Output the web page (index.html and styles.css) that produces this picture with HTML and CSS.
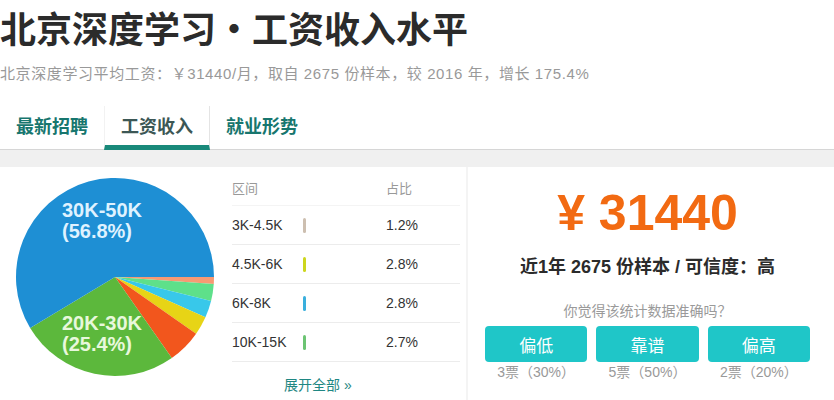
FILE: index.html
```html
<!DOCTYPE html>
<html>
<head>
    <title>北京深度学习 · 工资收入水平</title>
    <link rel="stylesheet" href="styles.css">
</head>
<body>
    <div class="page">
        <h1 class="title">北京深度学习<span class="dot">•</span>工资收入水平</h1>
        <p class="summary">北京深度学习平均工资：￥31440/月，取自 2675 份样本，较 2016 年，增长 175.4%</p>

        <div class="tabs">
            <a class="tab">最新招聘</a>
            <a class="tab active">工资收入</a>
            <a class="tab">就业形势</a>
        </div>
        <div class="band"></div>

        <div class="panels">
            <div class="panel chart-panel">
                <svg class="pie" width="232" height="232" viewBox="0 0 232 232">
                    <path d="M115,110 L214,110 A99,99 0 0 1 213.76,116.91 Z" fill="#f79a73"/>
                    <path d="M115,110 L213.76,116.91 A99,99 0 0 1 211.06,133.95 Z" fill="#5ee08a"/>
                    <path d="M115,110 L211.06,133.95 A99,99 0 0 1 205.44,150.27 Z" fill="#38c8ea"/>
                    <path d="M115,110 L205.44,150.27 A99,99 0 0 1 196.10,166.79 Z" fill="#e7d416"/>
                    <path d="M115,110 L196.10,166.79 A99,99 0 0 1 171.79,191.10 Z" fill="#f2561d"/>
                    <path d="M115,110 L171.79,191.10 A99,99 0 0 1 30.14,160.99 Z" fill="#5cb83c"/>
                    <path d="M115,110 L30.14,160.99 A99,99 0 1 1 214,110 Z" fill="#1e8fd4"/>
                    <text class="pie-label blue-label" x="62" y="50">30K-50K</text>
                    <text class="pie-label blue-label" x="62" y="71">(56.8%)</text>
                    <text class="pie-label green-label" x="62" y="163">20K-30K</text>
                    <text class="pie-label green-label" x="62" y="184">(25.4%)</text>
                </svg>

                <div class="range-table">
                    <div class="row head">
                        <span>区间</span>
                        <span></span>
                        <span>占比</span>
                    </div>
                    <div class="row">
                        <span>3K-4.5K</span>
                        <span><i class="bar bar-tan"></i></span>
                        <span>1.2%</span>
                    </div>
                    <div class="row">
                        <span>4.5K-6K</span>
                        <span><i class="bar bar-lime"></i></span>
                        <span>2.8%</span>
                    </div>
                    <div class="row">
                        <span>6K-8K</span>
                        <span><i class="bar bar-blue"></i></span>
                        <span>2.8%</span>
                    </div>
                    <div class="row">
                        <span>10K-15K</span>
                        <span><i class="bar bar-green"></i></span>
                        <span>2.7%</span>
                    </div>
                    <a class="more">展开全部 »</a>
                </div>
            </div>

            <div class="panel salary-panel">
                <div class="price">¥ 31440</div>
                <div class="meta">近1年 2675 份样本 / 可信度：高</div>
                <div class="question">你觉得该统计数据准确吗？</div>
                <div class="votes">
                    <div class="vote">
                        <button>偏低</button>
                        <span>3票（30%）</span>
                    </div>
                    <div class="vote">
                        <button>靠谱</button>
                        <span>5票（50%）</span>
                    </div>
                    <div class="vote">
                        <button>偏高</button>
                        <span>2票（20%）</span>
                    </div>
                </div>
            </div>
        </div>
    </div>
</body>
</html>
```

FILE: styles.css
```css
html, body {
    margin: 0;
    overflow: hidden;
}
body {
    font-family: "Liberation Sans", "Noto Sans CJK SC", sans-serif;
    background: white;
    color: #333;
}
.page {
    width: 834px;
}
.title {
    margin: 0;
    padding-top: 5px;
    font-family: "Noto Sans CJK SC", sans-serif;
    font-size: 36px;
    line-height: 44px;
    font-weight: bold;
    color: #2b2b2b;
    white-space: nowrap;
}
.dot {
    display: inline-block;
    width: 36px;
    text-align: center;
}
.summary {
    margin: 15px 0 0;
    font-size: 15px;
    line-height: 20px;
    letter-spacing: 0.6px;
    color: #999;
    white-space: nowrap;
}
.tabs {
    display: flex;
    margin-top: 22px;
    height: 43px;
    border-bottom: 1px solid #d6d6d6;
}
.tab {
    padding: 0 16px;
    font-family: "Noto Sans CJK SC", sans-serif;
    font-size: 18px;
    font-weight: bold;
    line-height: 38px;
    color: #17766e;
    border-bottom: 5px solid transparent;
    margin-bottom: -1px;
}
.tab.active {
    color: #3c5755;
    border-bottom-color: #19897a;
    border-left: 1px solid #f2f2f2;
    border-right: 1px solid #e4e4e4;
}
.band {
    height: 17px;
    background: #f0f0f0;
}
.panels {
    display: flex;
    gap: 2px;
    background: #f4f4f4;
    height: 240px;
}
.panel {
    background: white;
}
.chart-panel {
    width: 466px;
    display: flex;
}
.pie {
    flex: none;
}
.pie-label {
    font-family: "Liberation Sans", sans-serif;
    font-weight: bold;
    font-size: 20px;
}
.blue-label {
    fill: #dff2ff;
}
.green-label {
    fill: #e8f8dc;
}
.range-table {
    width: 228px;
}
.row {
    display: grid;
    grid-template-columns: 70px 84px 1fr;
    align-items: center;
    height: 38px;
    border-bottom: 1px solid #ececec;
    font-size: 14px;
}
.row.head {
    height: 38px;
    align-items: end;
    color: #999;
    font-size: 13px;
    border-bottom-color: #f4f4f4;
}
.row.head span {
    padding-bottom: 8px;
}
.bar {
    display: block;
    width: 3px;
    height: 15px;
    margin-left: 1px;
    border-radius: 2px;
}
.bar-tan { background: #cdbfb0; }
.bar-lime { background: #cdd61e; }
.bar-blue { background: #3aafdd; }
.bar-green { background: #6cc473; }
.more {
    display: block;
    margin: 13px 0 0 52px;
    font-size: 14px;
    line-height: 20px;
    color: #1f8783;
}
.salary-panel {
    flex: 1;
    padding: 18px 24px 0 17px;
    text-align: center;
}
.price {
    font-size: 50px;
    line-height: 56px;
    font-weight: bold;
    color: #f26a12;
}
.meta {
    margin-top: 14px;
    font-size: 18px;
    line-height: 24px;
    font-weight: bold;
    color: #2b2b2b;
}
.question {
    margin-top: 22px;
    font-size: 14px;
    line-height: 20px;
    color: #9a9a9a;
}
.votes {
    display: grid;
    grid-template-columns: repeat(3, 1fr);
    gap: 9px;
    margin-top: 5px;
}
.vote span {
    display: block;
    font-size: 14px;
    line-height: 20px;
    color: #999;
}
button {
    display: block;
    width: 100%;
    height: 36px;
    border: none;
    border-radius: 4px;
    background: #1fc6c8;
    color: white;
    font-family: "Noto Sans CJK SC", sans-serif;
    font-size: 17px;
    cursor: pointer;
}
button:hover {
    background: #19b2b4;
}
```
